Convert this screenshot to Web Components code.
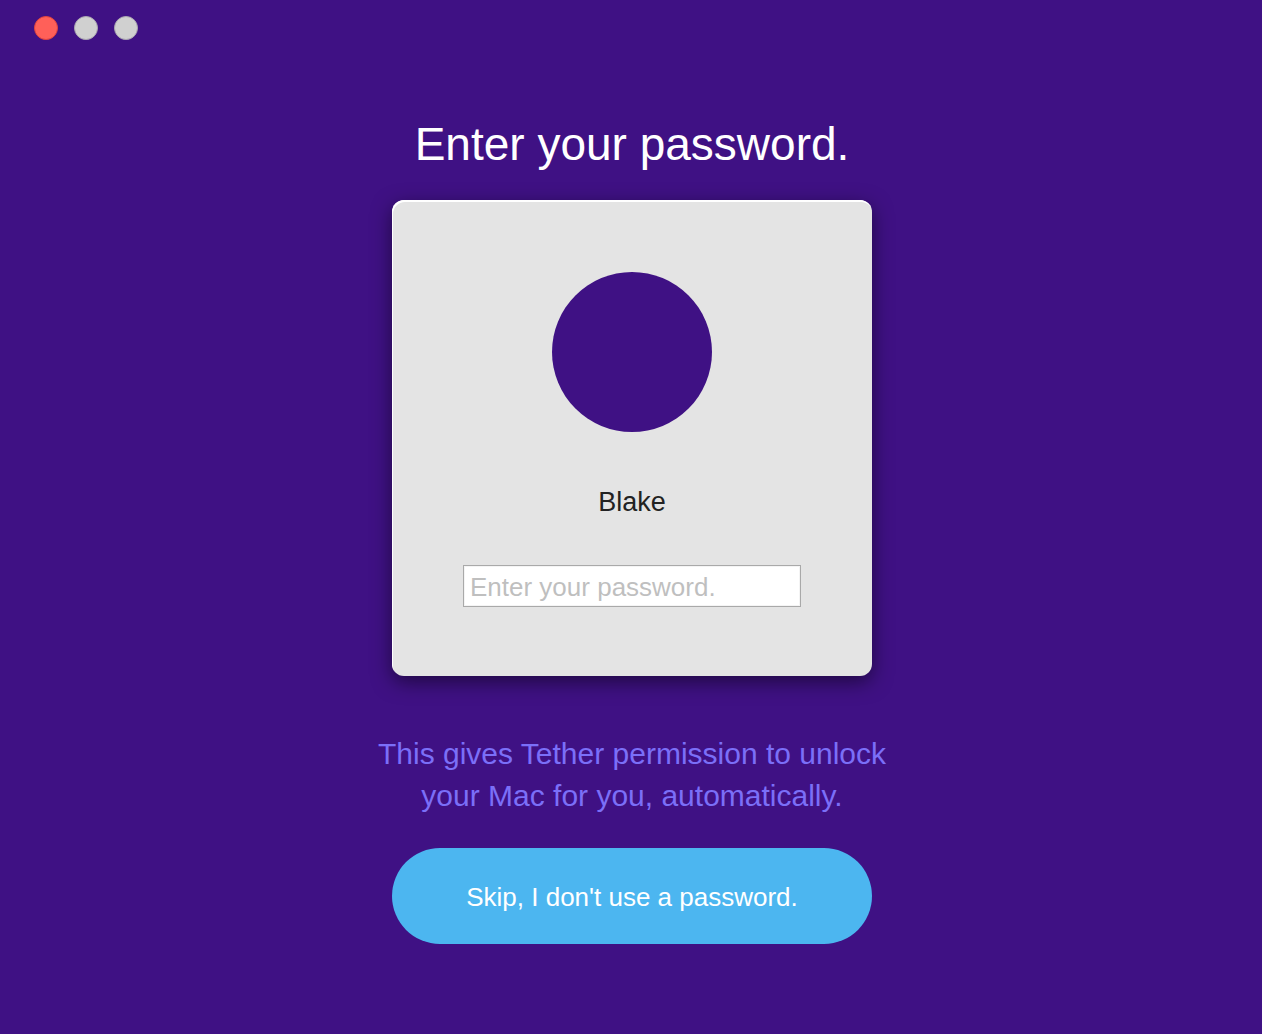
<!DOCTYPE html>
<html lang="en">
<head>
<meta charset="utf-8">
<title>Tether</title>
<style>
  body {
    margin: 0;
    background: #3f1184;
    font-family: "Liberation Sans", Arial, sans-serif;
  }
</style>
</head>
<body>

<tether-window>
  <tether-window-controls slot="titlebar"></tether-window-controls>
  <span slot="title">Enter your password.</span>
  <tether-user-card name="Blake" placeholder="Enter your password."></tether-user-card>
  <span slot="hint">This gives Tether permission to unlock<br>your Mac for you, automatically.</span>
  <tether-pill-button slot="action">Skip, I don't use a password.</tether-pill-button>
</tether-window>

<script>

  /**
   *
   * WindowControls
   *  - close, minimize and zoom buttons
   *
   */
  class WindowControls extends HTMLElement {

    constructor() {
      super();

      const shadowRoot = this.attachShadow({mode: 'open'});
      shadowRoot.innerHTML = `
        <style>
          :host {
            display: flex;
            gap: 16px;
          }
          button {
            box-sizing: border-box;
            width: 24px;
            height: 24px;
            padding: 0;
            border: 1px solid #aaa6b0;
            border-radius: 50%;
            background: #d0d0d0;
          }
          .close {
            border-color: #e0443e;
            background: #ff6059;
          }
        </style>
        <button class="close" type="button" aria-label="Close"></button>
        <button type="button" aria-label="Minimize"></button>
        <button type="button" aria-label="Zoom"></button>
      `;
    }

  }

  customElements.define('tether-window-controls', WindowControls);

  /**
   *
   * UserCard
   *  - avatar, user name and password field
   *
   */
  class UserCard extends HTMLElement {

    /**
     * @type {HTMLInputElement}
     */
    input;

    constructor() {
      super();

      const shadowRoot = this.attachShadow({mode: 'open'});
      shadowRoot.innerHTML = `
        <style>
          :host {
            box-sizing: border-box;
            display: flex;
            flex-direction: column;
            align-items: center;
            width: 100%;
            max-width: 480px;
            padding: 72px 71px 69px;
            border-radius: 12px;
            background: #e4e4e4;
            box-shadow: inset 1px 2px 0 #ffffff, 0 6px 20px rgba(0, 0, 0, 0.5);
          }
          .avatar {
            width: 160px;
            height: 160px;
            border-radius: 50%;
            background: #3f1184;
          }
          label {
            margin: 54px 0 46px;
            color: #222222;
            font-size: 27px;
            line-height: 33px;
          }
          input {
            box-sizing: border-box;
            width: 100%;
            height: 42px;
            padding: 2px 6px 0;
            border: 1px solid #a9a9a9;
            border-radius: 0;
            background: #ffffff;
            box-shadow: inset 0 0 0 1px #f4f4f4;
            color: #222222;
            font: inherit;
            font-size: 26px;
            outline: none;
          }
          input::placeholder {
            color: #bfbfbf;
          }
        </style>
        <div class="avatar"></div>
        <label for="password"></label>
        <input id="password" type="password">
      `;

      this.input = shadowRoot.querySelector('input');
    }

    /**
     *
     */
    connectedCallback() {
      this.shadowRoot.querySelector('label').textContent = this.getAttribute('name');
      this.input.placeholder = this.getAttribute('placeholder');
    }

  }

  customElements.define('tether-user-card', UserCard);

  /**
   *
   * PillButton
   *  - large rounded button
   *
   */
  class PillButton extends HTMLElement {

    constructor() {
      super();

      const shadowRoot = this.attachShadow({mode: 'open'});
      shadowRoot.innerHTML = `
        <style>
          :host {
            display: block;
            width: 100%;
            max-width: 480px;
          }
          button {
            width: 100%;
            padding: 33px 24px 31px;
            border: 0;
            border-radius: 48px;
            background: #4cb6f0;
            color: #ffffff;
            font: inherit;
            font-size: 26px;
            line-height: 32px;
          }
        </style>
        <button type="button"><slot></slot></button>
      `;
    }

  }

  customElements.define('tether-pill-button', PillButton);

  /**
   *
   * TetherWindow
   *  - window with a title bar and one centered column
   *
   */
  class TetherWindow extends HTMLElement {

    constructor() {
      super();

      const shadowRoot = this.attachShadow({mode: 'open'});
      shadowRoot.innerHTML = `
        <style>
          :host {
            display: flex;
            flex-direction: column;
            min-height: 100vh;
          }
          header {
            padding: 16px 34px;
          }
          main {
            display: flex;
            flex-direction: column;
            align-items: center;
            padding: 60px 24px 90px 26px;
          }
          h1 {
            margin: 0 0 28px;
            color: #ffffff;
            font-size: 46px;
            font-weight: normal;
            line-height: 56px;
          }
          p {
            margin: 57px 0 31px;
            color: #7b6ff8;
            font-size: 30px;
            line-height: 42px;
            text-align: center;
          }
        </style>
        <header><slot name="titlebar"></slot></header>
        <main>
          <h1><slot name="title"></slot></h1>
          <slot></slot>
          <p><slot name="hint"></slot></p>
          <slot name="action"></slot>
        </main>
      `;
    }

  }

  customElements.define('tether-window', TetherWindow);

</script>
</body>
</html>
